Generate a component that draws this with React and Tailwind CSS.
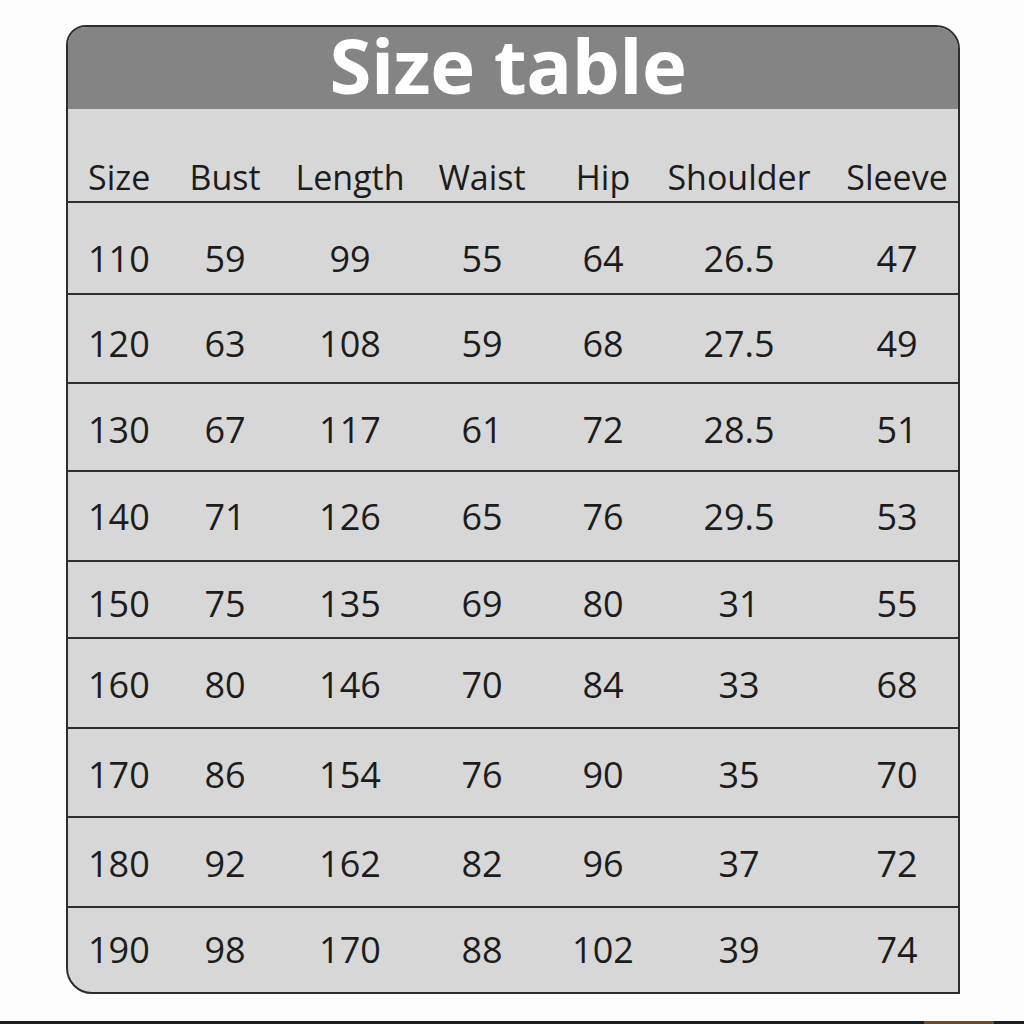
const cols = [
    'pl-[20px] text-left',
    'text-center',
    'text-center',
    'text-center',
    'text-center',
    'text-center',
    'pl-[10px] text-center',
]

const headers = ['Size', 'Bust', 'Length', 'Waist', 'Hip', 'Shoulder', 'Sleeve']

const rows = [
    { h: 'h-[92px]', pt: 'pt-[38px]', v: ['110', '59', '99', '55', '64', '26.5', '47'] },
    { h: 'h-[89px]', pt: 'pt-[31px]', v: ['120', '63', '108', '59', '68', '27.5', '49'] },
    { h: 'h-[88px]', pt: 'pt-[28px]', v: ['130', '67', '117', '61', '72', '28.5', '51'] },
    { h: 'h-[90px]', pt: 'pt-[27px]', v: ['140', '71', '126', '65', '76', '29.5', '53'] },
    { h: 'h-[77px]', pt: 'pt-[24px]', v: ['150', '75', '135', '69', '80', '31', '55'] },
    { h: 'h-[90px]', pt: 'pt-[28px]', v: ['160', '80', '146', '70', '84', '33', '68'] },
    { h: 'h-[89px]', pt: 'pt-[28px]', v: ['170', '86', '154', '76', '90', '35', '70'] },
    { h: 'h-[90px]', pt: 'pt-[28px]', v: ['180', '92', '162', '82', '96', '37', '72'] },
    { h: 'h-[83px]', pt: 'pt-[24px]', v: ['190', '98', '170', '88', '102', '39', '74'] },
]

const grid = 'grid grid-cols-[92px_130px_120px_144px_98px_174px_132px]'

export default function App() {
    return (
        <div className="w-[1024px] h-[1024px] bg-[#fdfdfd] flex flex-col overflow-hidden" style={{ fontFamily: '"Open Sans", "Noto Sans", sans-serif' }}>
            <div className="ml-[66px] mt-[25px] w-[894px] h-[969px] border-2 border-[#2e2e2e] rounded-tl-[20px] rounded-tr-[24px] rounded-bl-[26px] rounded-br-none bg-[#d7d7d7] flex flex-col">
                <div className="h-[82px] bg-[#848484] rounded-tl-[18px] rounded-tr-[22px] flex items-end justify-center pb-[8px] pr-[10px] flex-shrink-0">
                    <h1 className="text-[76px] leading-[72px] font-bold text-white tracking-[-0.5px]">Size table</h1>
                </div>
                <div className={`${grid} h-[94px] border-b-2 border-[#2e2e2e] items-end pb-[7px] text-[34px] leading-none text-[#1c1c1c]`}>
                    {headers.map((t, i) => (
                        <div key={t} className={cols[i]}>{t}</div>
                    ))}
                </div>
                {rows.map((r, ri) => (
                    <div
                        key={r.v[0]}
                        className={`${grid} ${r.h} ${r.pt} ${ri < rows.length - 1 ? 'border-b-2 border-[#2e2e2e]' : ''} items-start text-[36px] leading-none text-[#1c1c1c]`}
                    >
                        {r.v.map((t, i) => (
                            <div key={i} className={cols[i]}>{t}</div>
                        ))}
                    </div>
                ))}
            </div>
            <div className="mt-auto h-[3px] bg-[#1e1e1e] flex justify-end">
                <div className="w-[70px] mr-[30px] bg-[#6b4a2e]" />
            </div>
        </div>
    )
}
